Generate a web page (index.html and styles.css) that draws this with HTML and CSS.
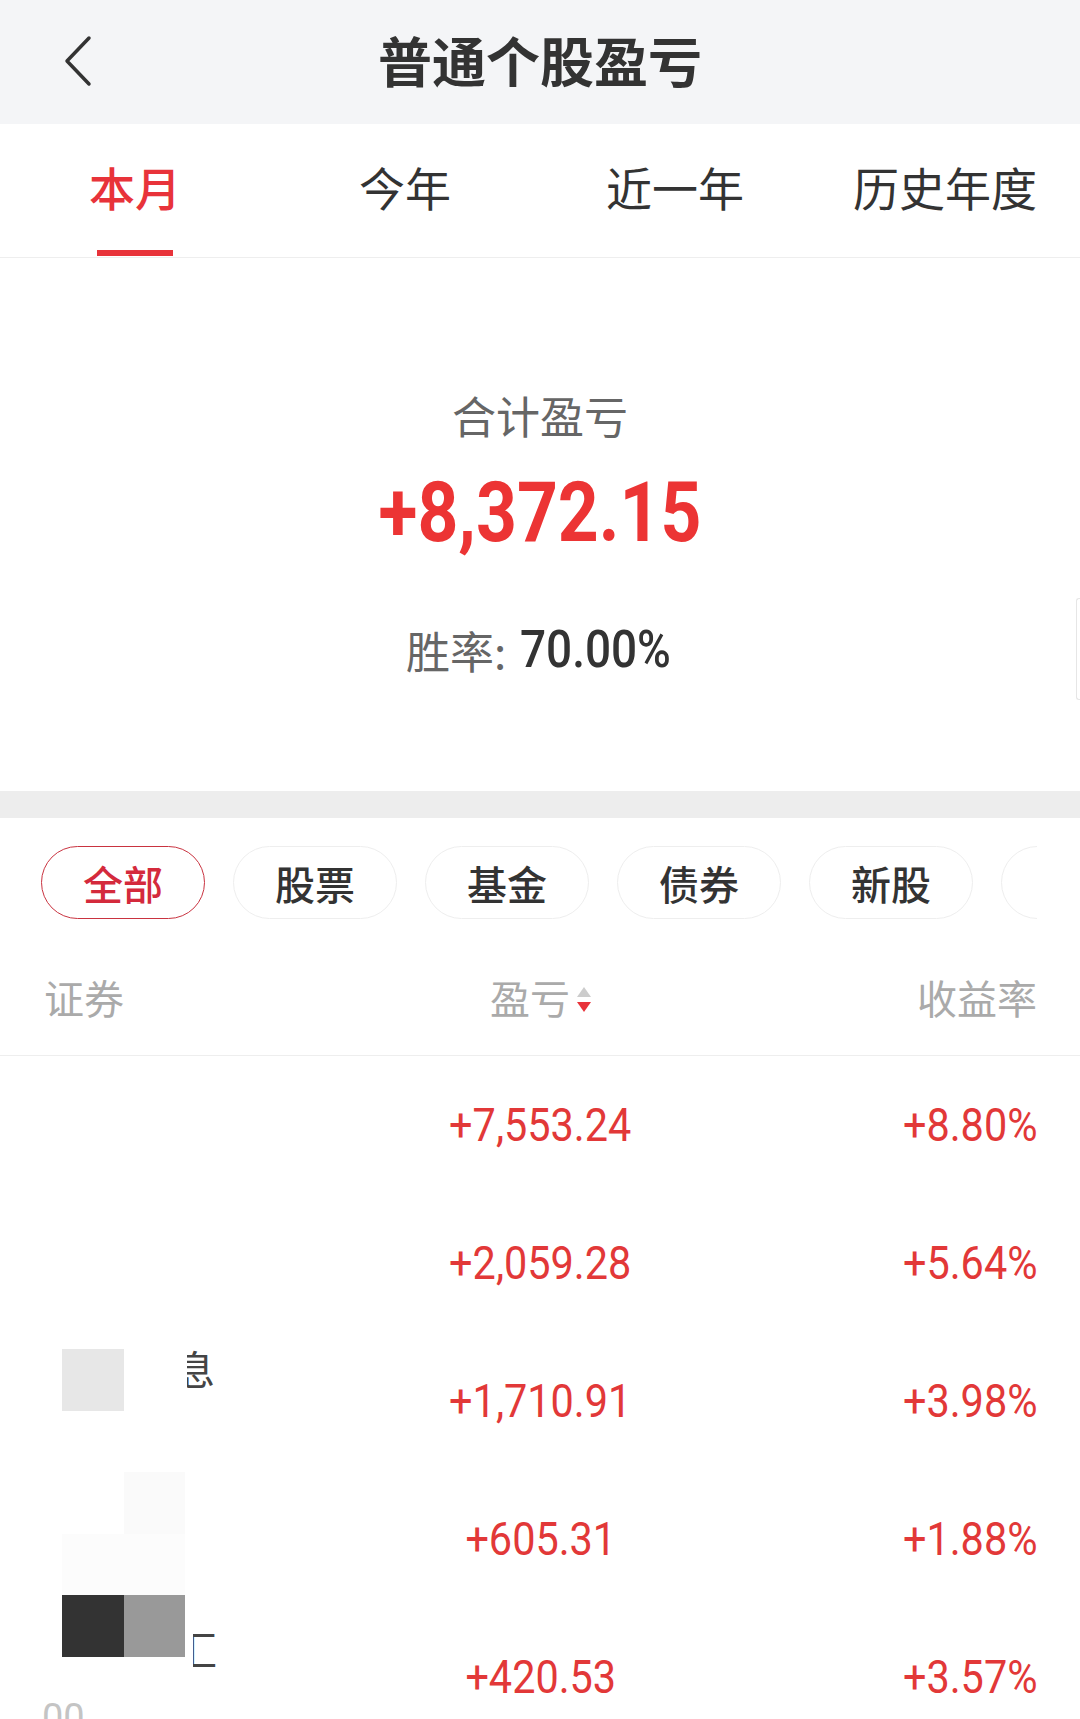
FILE: index.html
```html
<!DOCTYPE html>
<html lang="zh-CN">
<head>
  <meta charset="UTF-8">
  <meta name="viewport" content="width=device-width, initial-scale=1.0">
  <title>普通个股盈亏</title>
  <link rel="stylesheet" href="styles.css">
</head>
<body>
  <div class="page">
    <header class="nav">
      <a class="back" href="#">
        <svg width="32" height="52" viewBox="0 0 32 52">
          <polyline points="27,3 5,26 27,49" fill="none" stroke="#333" stroke-width="3.5" stroke-linecap="round" stroke-linejoin="round"/>
        </svg>
      </a>
      <h1>普通个股盈亏</h1>
      <span></span>
    </header>

    <nav class="tabs">
      <div class="tab active">本月</div>
      <div class="tab">今年</div>
      <div class="tab">近一年</div>
      <div class="tab">历史年度</div>
    </nav>

    <section class="summary">
      <div class="sum-label">合计盈亏</div>
      <div class="sum-value"><span class="num">+8,372.15</span></div>
      <div class="win-rate"><span>胜率:</span><span class="num">70.00%</span></div>
      <span class="edge-hint"></span>
    </section>

    <div class="divider"></div>

    <div class="chips-wrap">
      <div class="chips">
        <div class="chip active">全部</div>
        <div class="chip">股票</div>
        <div class="chip">基金</div>
        <div class="chip">债券</div>
        <div class="chip">新股</div>
        <div class="chip">其他</div>
      </div>
    </div>

    <div class="table-head">
      <div class="col-name">证券</div>
      <div class="col-mid">盈亏<span class="sort"><i class="up"></i><i class="down"></i></span></div>
      <div class="col-right">收益率</div>
    </div>

    <div class="rows">
      <div class="row"><div class="col-name"></div><div class="col-mid"><span class="num">+7,553.24</span></div><div class="col-right"><span class="num">+8.80%</span></div></div>
      <div class="row"><div class="col-name"></div><div class="col-mid"><span class="num">+2,059.28</span></div><div class="col-right"><span class="num">+5.64%</span></div></div>
      <div class="row"><div class="col-name"></div><div class="col-mid"><span class="num">+1,710.91</span></div><div class="col-right"><span class="num">+3.98%</span></div></div>
      <div class="row"><div class="col-name"></div><div class="col-mid"><span class="num">+605.31</span></div><div class="col-right"><span class="num">+1.88%</span></div></div>
      <div class="row"><div class="col-name"></div><div class="col-mid"><span class="num">+420.53</span></div><div class="col-right"><span class="num">+3.57%</span></div></div>

      <!-- redaction over the security names -->
      <div class="mosaic">
        <i class="m1"></i><i></i>
        <i></i><i></i>
        <i></i><i class="m2"></i>
        <i class="m3"></i><i class="m3"></i>
        <i class="m4"></i><i class="m5"></i>
      </div>
      <span class="frag frag-a"><b>息</b></span>
      <span class="frag frag-b"><b>汇</b></span>
      <span class="code-frag">00</span>
    </div>
  </div>
</body>
</html>
```

FILE: styles.css
```css
body {
  margin: 0;
  font-family: "Noto Sans CJK SC", sans-serif;
  background-color: #fff;
  color: #333;
}
.page {
  width: 1080px;
  height: 1719px;
  overflow: hidden;
}
/* narrow DIN-like figures */
.num {
  display: inline-block;
  font-family: Roboto, sans-serif;
  transform: scaleX(0.88);
}

/* top bar */
.nav {
  height: 124px;
  background-color: #f4f5f7;
  display: grid;
  grid-template-columns: 1fr auto 1fr;
  align-items: center;
}
.back {
  display: flex;
  padding-left: 62px;
  padding-bottom: 2px;
}
.nav h1 {
  margin: 0 0 4px;
  font-size: 54px;
  font-weight: 700;
  color: #333;
  line-height: 1;
}

/* period tabs */
.tabs {
  display: grid;
  grid-template-columns: repeat(4, 1fr);
  height: 133px;
  border-bottom: 1px solid #eee;
}
.tab {
  position: relative;
  display: flex;
  align-items: center;
  justify-content: center;
  padding-bottom: 10px;
  font-size: 46px;
  color: #333;
}
.tab.active {
  color: #e8333a;
  font-weight: 500;
}
.tab.active::after {
  content: "";
  position: absolute;
  left: 50%;
  bottom: 1px;
  width: 76px;
  height: 6px;
  margin-left: -38px;
  background-color: #e8333a;
}

/* summary */
.summary {
  position: relative;
  text-align: center;
  padding: 127px 0 111px;
}
.sum-label {
  font-size: 44px;
  line-height: 60px;
  color: #666;
}
.sum-value {
  display: flex;
  justify-content: center;
  height: 100px;
  margin-top: 16px;
  font-size: 84px;
  font-weight: 700;
  line-height: 100px;
  color: #ec3434;
}
.sum-value .num {
  transform: scaleX(0.85);
  margin-top: 2px;
}
.win-rate {
  display: flex;
  justify-content: center;
  align-items: center;
  height: 60px;
  margin-top: 59px;
  font-size: 44px;
  line-height: 60px;
  color: #666;
}
.win-rate .num {
  margin-left: 14px;
  margin-right: -14px;
  font-size: 51px;
  font-weight: 500;
  color: #333;
  transform: scaleX(0.9);
  transform-origin: left center;
}
.edge-hint {
  position: absolute;
  right: 0;
  top: 340px;
  width: 3px;
  height: 100px;
  border: 1px solid #e6e6e6;
  border-right: none;
  border-radius: 3px 0 0 3px;
}
.divider {
  height: 27px;
  background-color: #ededed;
}

/* category chips */
.chips-wrap {
  padding: 28px 43px 26px 41px;
}
.chips {
  display: flex;
  gap: 28px;
  overflow: hidden;
}
.chip {
  flex-shrink: 0;
  box-sizing: border-box;
  width: 164px;
  height: 73px;
  border: 1.5px solid #eee;
  border-radius: 37px;
  display: flex;
  align-items: center;
  justify-content: center;
  font-size: 40px;
  font-weight: 500;
  color: #333;
}
.chip.active {
  border-color: #c93340;
  color: #d42a3c;
}

/* list */
.table-head,
.row {
  display: grid;
  grid-template-columns: 1fr 1fr 1fr;
  align-items: center;
  padding: 0 43px 0 44px;
}
.table-head {
  height: 110px;
  border-bottom: 1px solid #eee;
  font-size: 40px;
  color: #aaa;
}
.table-head > div {
  padding-bottom: 6px;
}
.col-mid,
.col-right {
  display: flex;
  align-items: center;
}
.col-mid {
  justify-content: center;
}
.col-right {
  justify-content: flex-end;
}
.sort {
  display: flex;
  flex-direction: column;
  gap: 5px;
  margin-left: 7px;
  margin-top: 4px;
}
.sort i {
  width: 0;
  height: 0;
  border-left: 7px solid transparent;
  border-right: 7px solid transparent;
}
.sort .up {
  border-bottom: 10px solid #ccc;
}
.sort .down {
  border-top: 10px solid #e8333a;
}
.rows {
  position: relative;
}
.row {
  height: 138px;
  font-size: 46px;
  color: #e23838;
}
.row .num {
  transform: scaleX(0.9);
}
.row .col-right .num {
  transform-origin: right center;
}
.mosaic {
  position: absolute;
  left: 62px;
  top: 293px;
  display: grid;
  grid-template-columns: repeat(2, 61.5px);
  grid-auto-rows: 61.5px;
}
.mosaic .m1 { background-color: #e7e7e7; }
.mosaic .m2 { background-color: #fafafa; }
.mosaic .m3 { background-color: #fcfcfc; }
.mosaic .m4 { background-color: #333; }
.mosaic .m5 { background-color: #999; }
.frag {
  position: absolute;
  overflow: hidden;
  height: 44px;
  font-size: 40px;
  line-height: 44px;
  color: #444;
}
.frag b {
  font-weight: 400;
}
.frag-a {
  left: 187px;
  top: 290px;
  width: 28px;
}
.frag-a b {
  margin-left: -12px;
}
.frag-b {
  left: 193px;
  top: 570px;
  width: 24px;
}
.frag-b b {
  margin-left: -16px;
}
.code-frag {
  position: absolute;
  left: 42px;
  top: 640px;
  font-family: Roboto, sans-serif;
  font-size: 38px;
  color: #c4c4c4;
}
```
